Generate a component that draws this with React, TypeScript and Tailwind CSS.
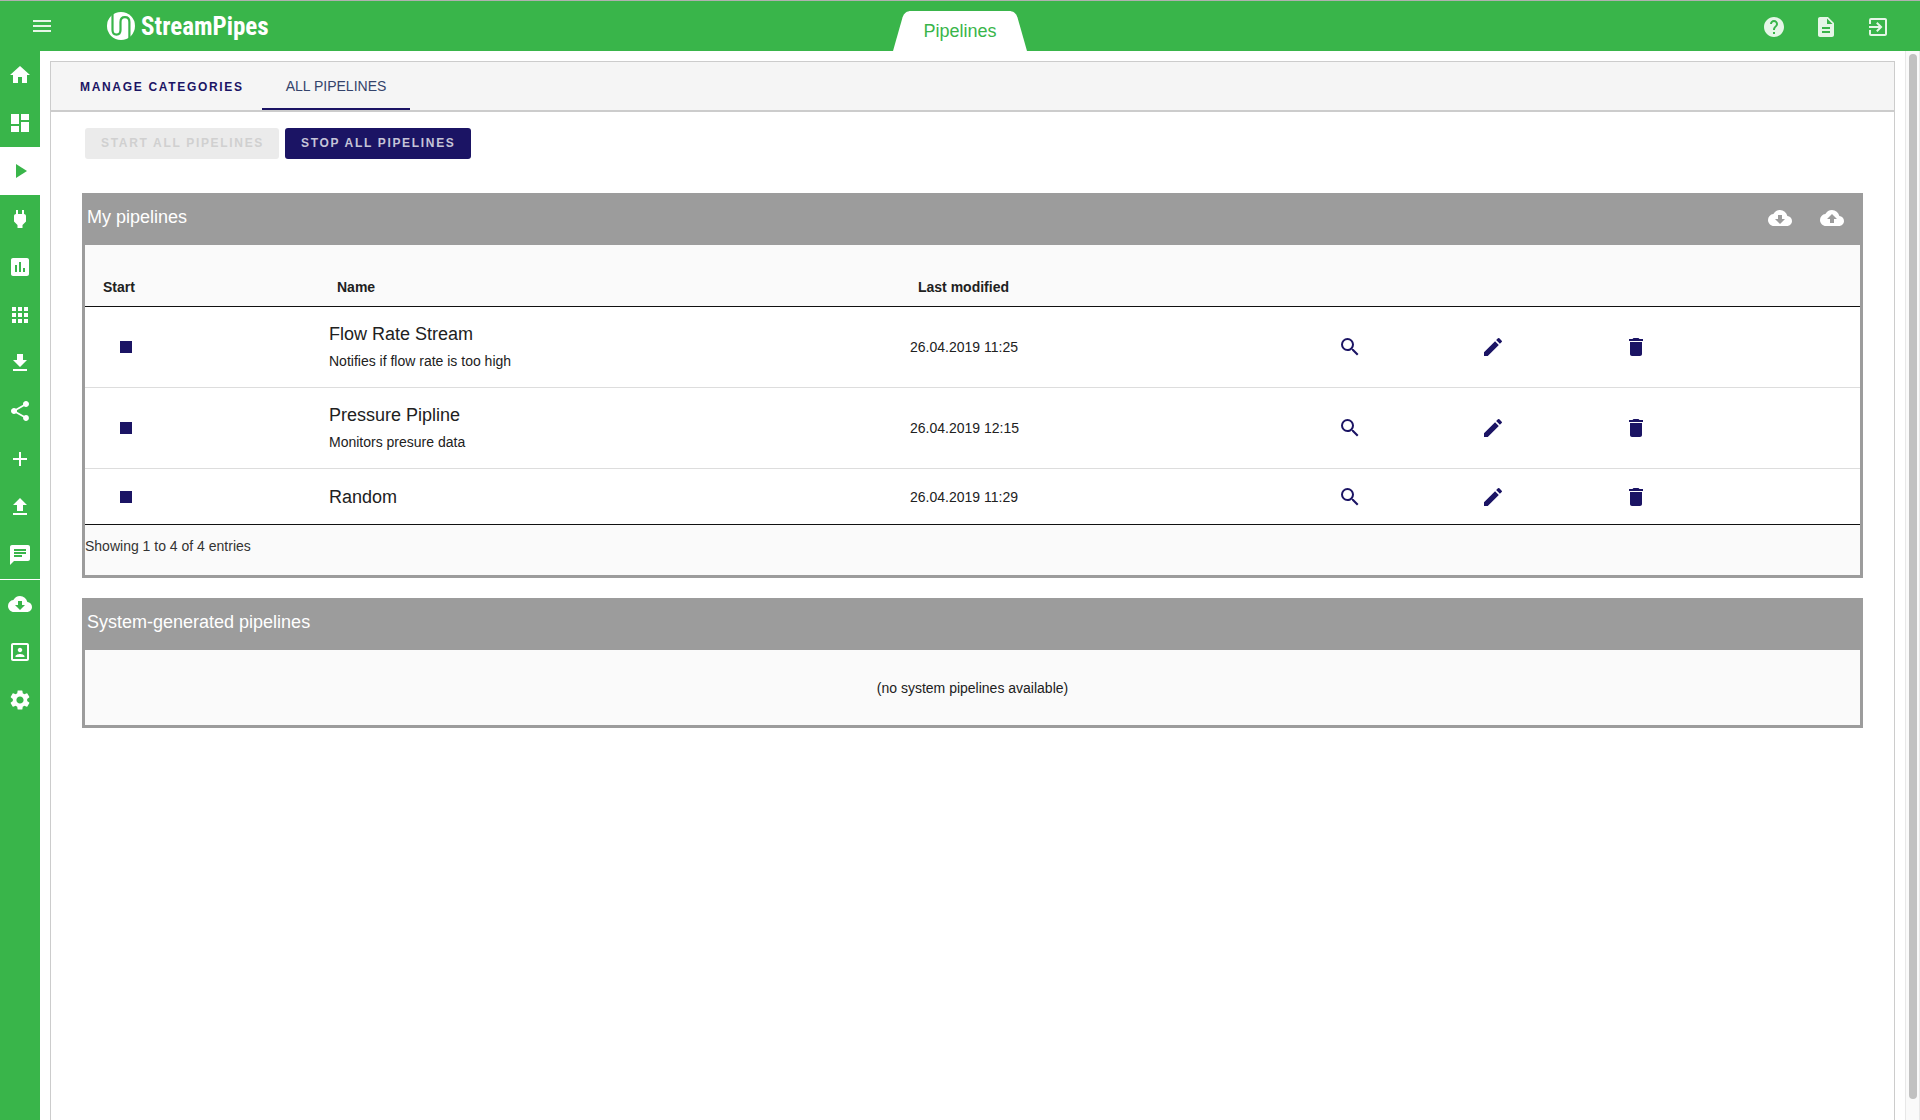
import React, { useState } from 'react'
import type { IconType } from 'react-icons'
import {
  MdAdd,
  MdApps,
  MdAssessment,
  MdChat,
  MdCloudDownload,
  MdCloudUpload,
  MdDashboard,
  MdDelete,
  MdDescription,
  MdEdit,
  MdExitToApp,
  MdFileDownload,
  MdFileUpload,
  MdHelp,
  MdHome,
  MdMenu,
  MdPlayArrow,
  MdPortrait,
  MdPower,
  MdSearch,
  MdSettings,
  MdShare,
  MdStop,
} from 'react-icons/md'

type NavItem = { id: string; label: string; icon: IconType }

const mainNav: NavItem[] = [
  { id: 'home', label: 'Home', icon: MdHome },
  { id: 'editor', label: 'Pipeline Editor', icon: MdDashboard },
  { id: 'pipelines', label: 'Pipelines', icon: MdPlayArrow },
  { id: 'connect', label: 'Connect', icon: MdPower },
  { id: 'dashboard', label: 'Dashboard', icon: MdAssessment },
  { id: 'apps', label: 'App Overview', icon: MdApps },
  { id: 'install', label: 'Install Pipeline Elements', icon: MdFileDownload },
  { id: 'knowledge', label: 'Knowledge Management', icon: MdShare },
  { id: 'add', label: 'Add', icon: MdAdd },
  { id: 'upload', label: 'File Upload', icon: MdFileUpload },
  { id: 'notifications', label: 'Notifications', icon: MdChat },
]

const adminNav: NavItem[] = [
  { id: 'marketplace', label: 'Marketplace', icon: MdCloudDownload },
  { id: 'profile', label: 'Profile', icon: MdPortrait },
  { id: 'settings', label: 'Settings', icon: MdSettings },
]

const pipelines = [
  { name: 'Flow Rate Stream', description: 'Notifies if flow rate is too high', modified: '26.04.2019 11:25' },
  { name: 'Pressure Pipline', description: 'Monitors presure data', modified: '26.04.2019 12:15' },
  { name: 'Random', description: '', modified: '26.04.2019 11:29' },
]

function Logo() {
  return (
    <div className="flex items-center gap-1.5 text-white">
      <svg width="28" height="28" viewBox="0 0 28 28" aria-hidden="true">
        <circle cx="14" cy="14" r="14" fill="white" />
        <path
          d="M5.500 0V18c0 3 1.500 4.600 4 4.600s4-1.600 4-4.600V10c0-3 1.700-4.800 4.400-4.800S22.400 7 22.400 10V28"
          fill="none"
          stroke="#39b54a"
          strokeWidth="2.200"
        />
      </svg>
      <span className="pt-0.5 font-['Roboto_Condensed','Roboto',sans-serif] text-[25px] leading-7 font-bold">StreamPipes</span>
    </div>
  )
}

function NavButton({ item, active, onSelect }: { item: NavItem; active: boolean; onSelect: (id: string) => void }) {
  const Icon = item.icon
  return (
    <button
      type="button"
      aria-label={item.label}
      onClick={() => onSelect(item.id)}
      className={
        active
          ? 'flex h-12 w-10 items-center justify-center bg-white text-[#39b54a]'
          : 'flex h-12 w-10 items-center justify-center text-white'
      }
    >
      <Icon size={24} />
    </button>
  )
}

function IconButton({ icon: Icon, label, className }: { icon: IconType; label: string; className: string }) {
  return (
    <button type="button" aria-label={label} className={`flex size-10 items-center justify-center ${className}`}>
      <Icon size={24} />
    </button>
  )
}

function Panel({ title, actions, children }: { title: string; actions?: React.ReactNode; children: React.ReactNode }) {
  return (
    <section className="border-[3px] border-t-0 border-[#9c9c9c] bg-[#fafafa]">
      <div className="flex h-13 justify-between bg-[#9c9c9c] pl-0.5 text-white">
        <h2 className="pt-3 text-lg leading-6">{title}</h2>
        {actions}
      </div>
      {children}
    </section>
  )
}

export default function App() {
  const [section, setSection] = useState('pipelines')

  return (
    <div className="flex min-h-screen flex-col bg-white font-['Liberation_Sans',Arial,sans-serif] text-sm text-[#212121]">
      <header className="grid h-[51px] grid-cols-[1fr_auto_1fr] border-t border-[#b0b0b0] bg-[#39b54a]">
        <div className="flex items-center gap-[45px] pl-[22px]">
          <IconButton icon={MdMenu} label="Toggle menu" className="text-white/87" />
          <Logo />
        </div>
        <div className="relative flex w-[134px] items-center justify-center self-end pt-1.5 pb-1.5 text-lg leading-7 text-[#39b54a]">
          <svg className="absolute inset-0 h-full w-full" viewBox="0 0 134 40" fill="white" aria-hidden="true">
            <path d="M0 40 9.500 6.500C11 2 14 0 18 0h98c4 0 7 2 8.500 6.500L134 40z" />
          </svg>
          <h1 className="relative">Pipelines</h1>
        </div>
        <div className="flex items-center justify-end gap-3 pt-0.5 pr-[22px]">
          <IconButton icon={MdHelp} label="Help" className="text-white/87" />
          <IconButton icon={MdDescription} label="Documentation" className="text-white/87" />
          <IconButton icon={MdExitToApp} label="Logout" className="text-white/87" />
        </div>
      </header>

      <div className="flex flex-1">
        <nav className="flex w-10 flex-col bg-[#39b54a]">
          {mainNav.map((item) => (
            <NavButton key={item.id} item={item} active={item.id === section} onSelect={setSection} />
          ))}
          <div className="h-px bg-white" />
          {adminNav.map((item) => (
            <NavButton key={item.id} item={item} active={item.id === section} onSelect={setSection} />
          ))}
        </nav>

        <main className="flex flex-1 flex-col px-2.5 pt-2.5">
          <div className="flex-1 border border-b-0 border-[#cccccc]">
            <div className="flex h-[50px] border-b-2 border-[#cccccc] bg-[#f5f5f5] text-[#1b1464]" role="tablist">
              <button type="button" role="tab" aria-selected="false" className="pt-0.5 pr-[18px] pl-[29px] text-xs font-bold tracking-[0.14em]">
                MANAGE CATEGORIES
              </button>
              <button type="button" role="tab" aria-selected="true" className="border-b-2 border-[#1b1464] px-6 pt-0.5 text-[#34436b]">
                ALL PIPELINES
              </button>
            </div>

            <div className="px-[31px] pt-4">
              <div className="flex gap-1.5 px-[3px] pb-[34px]">
                <button type="button" disabled className="h-[31px] rounded-[3px] bg-[#ebebeb] pr-[15px] pb-0.5 pl-4 text-xs font-bold tracking-[0.14em] text-[#d0d0d0]">
                  START ALL PIPELINES
                </button>
                <button type="button" className="h-[31px] rounded-[3px] bg-[#1b1464] pr-[15px] pb-0.5 pl-4 text-xs font-bold tracking-[0.14em] text-[#c6c4d8]">
                  STOP ALL PIPELINES
                </button>
              </div>

              <div className="flex flex-col gap-5">
                <Panel
                  title="My pipelines"
                  actions={
                    <div className="flex items-center gap-3 pr-2 pb-0.5">
                      <IconButton icon={MdCloudDownload} label="Download pipelines" className="text-white" />
                      <IconButton icon={MdCloudUpload} label="Upload pipelines" className="text-white" />
                    </div>
                  }
                >
                  <table className="w-full table-fixed border-separate border-spacing-0 bg-white text-left">
                    <colgroup>
                      <col className="w-[234px]" />
                      <col />
                      <col className="w-[370px]" />
                      <col className="w-[590px]" />
                    </colgroup>
                    <thead className="bg-[#fafafa]">
                      <tr className="h-[62px] *:border-b *:border-[#111111]">
                        <th scope="col" className="px-[18px] pt-[22px]">Start</th>
                        <th scope="col" className="px-[18px] pt-[22px]">Name</th>
                        <th scope="col" className="px-[18px] pt-[22px]">Last modified</th>
                        <td />
                      </tr>
                    </thead>
                    <tbody>
                      {pipelines.map((p) => (
                        <tr key={p.name} className="h-14 *:border-b *:border-[#dddddd] last:*:border-[#111111]">
                          <td className="px-[21px]">
                            <IconButton icon={MdStop} label={`Stop ${p.name}`} className="text-[#1b1464]" />
                          </td>
                          <td className="px-2.5 pt-3.5 pb-3 leading-[27px]">
                            <h3 className="text-lg leading-[27px]">{p.name}</h3>
                            {p.description && <p>{p.description}</p>}
                          </td>
                          <td className="px-2.5">{p.modified}</td>
                          <td className="px-2">
                            <div className="grid w-[430px] grid-cols-3 justify-items-center">
                              <IconButton icon={MdSearch} label={`Show ${p.name}`} className="text-[#1b1464]" />
                              <IconButton icon={MdEdit} label={`Edit ${p.name}`} className="text-[#1b1464]" />
                              <IconButton icon={MdDelete} label={`Delete ${p.name}`} className="text-[#1b1464]" />
                            </div>
                          </td>
                        </tr>
                      ))}
                    </tbody>
                  </table>
                  <p className="h-[50px] pt-[11px] text-[#333333]">Showing 1 to 4 of 4 entries</p>
                </Panel>

                <Panel title="System-generated pipelines">
                  <p className="flex h-[75px] items-center justify-center">(no system pipelines available)</p>
                </Panel>
              </div>
            </div>
          </div>
        </main>

        <div className="flex w-[15px] flex-col border-x border-[#e8e8e8] bg-[#fafafa] pt-[3px] pb-[21px] pl-[3px]" aria-hidden="true">
          <div className="w-2 flex-1 rounded-full bg-[#c1c1c1]" />
        </div>
      </div>
    </div>
  )
}
